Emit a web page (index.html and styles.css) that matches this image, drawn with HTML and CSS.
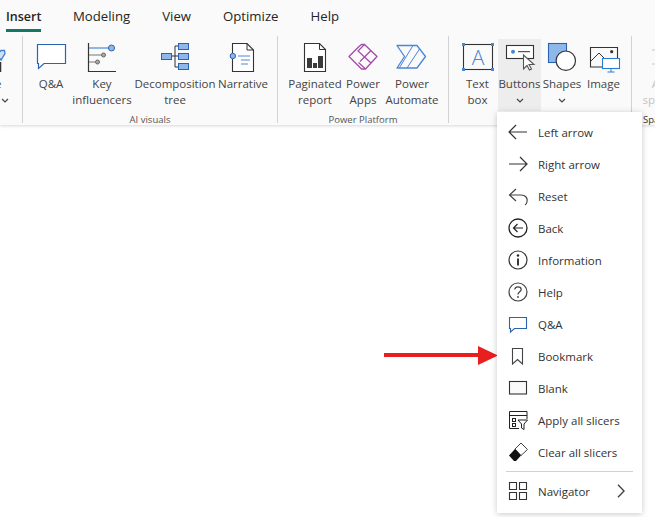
FILE: index.html
```
<!DOCTYPE html>
<html lang="en">
<head>
<meta charset="utf-8">
<title>Insert ribbon</title>
<link rel="stylesheet" href="styles.css">
</head>
<body>
<header class="ribbon">
  <nav class="tabs">
    <span class="tab tab-active">Insert</span>
    <span class="tab">Modeling</span>
    <span class="tab">View</span>
    <span class="tab">Optimize</span>
    <span class="tab">Help</span>
  </nav>
  <div class="groups">
    <section class="group group-lead">
      <div class="lead-item">
        <svg class="lead-icon" width="22" height="32" viewBox="0 0 22 32"><path d="M-3 14L1 9.5H4.5L5 12.5L1 19Z" fill="#cfe0f5" stroke="#3b7fd0" stroke-width="1.3"/><path d="M.5 21v10" stroke="#333" stroke-width="1.5"/></svg>
        <span class="lead-text">e</span>
        <svg class="chev" width="8" height="5" viewBox="0 0 8 5"><path d="M1 1l3 3 3-3" fill="none" stroke="#444" stroke-width="1.2"/></svg>
      </div>
    </section>

    <section class="group group-ai">
      <div class="items">
        <div class="item w-qa">
          <svg class="icon" width="34" height="32" viewBox="0 0 34 32"><path d="M3.5 3.5H31.5V22.5H10L4.5 27.5V22.5H3.5Z" fill="#fff" stroke="#2b63ae" stroke-width="1.2"/></svg>
          <span class="label">Q&amp;A</span>
        </div>
        <div class="item w-key">
          <svg class="icon" width="34" height="32" viewBox="0 0 34 32"><path d="M3.5 2V30.5H31" fill="none" stroke="#333" stroke-width="1.2"/><path d="M4 7H24" stroke="#4a86d8" stroke-width="1.2"/><path d="M4 14H16M4 21H10" stroke="#777" stroke-width="1.2"/><circle cx="26.5" cy="7" r="3" fill="#8fb8ea" stroke="#2b63ae"/><circle cx="18.5" cy="14" r="2" fill="#aaa" stroke="#666"/><circle cx="12.5" cy="21" r="2" fill="#aaa" stroke="#666"/></svg>
          <span class="label">Key<br>influencers</span>
        </div>
        <div class="item w-dec">
          <svg class="icon" width="34" height="32" viewBox="0 0 34 32"><path d="M14 15H20M17 5V26M17 5H20M17 26H20" fill="none" stroke="#333"/><rect x="3.5" y="12.5" width="10" height="6" fill="#8fb8ea" stroke="#2b63ae"/><rect x="20.5" y="2.5" width="10" height="6" fill="#8fb8ea" stroke="#2b63ae"/><rect x="20.5" y="12.5" width="10" height="6" fill="#8fb8ea" stroke="#2b63ae"/><rect x="20.5" y="22.5" width="10" height="6" fill="#8fb8ea" stroke="#2b63ae"/></svg>
          <span class="label">Decomposition<br>tree</span>
        </div>
        <div class="item w-nar">
          <svg class="icon" width="34" height="32" viewBox="0 0 34 32"><path d="M6.5 12V2.5H21L27.5 9V30.5H6.5V18" fill="#fff" stroke="#333" stroke-width="1.1"/><path d="M21 2.5V9H27.5" fill="none" stroke="#333"/><circle cx="6.8" cy="15" r="2.7" fill="#8fb8ea" stroke="#2b63ae"/><path d="M12 15H24M15 19H24M15 23H22" stroke="#4a86d8"/></svg>
          <span class="label">Narrative</span>
        </div>
      </div>
      <div class="group-name">AI visuals</div>
    </section>

    <section class="group group-pp">
      <div class="items">
        <div class="item w-pag">
          <svg class="icon" width="34" height="32" viewBox="0 0 34 32"><path d="M6.5 2.5H21.5L27.5 8.5V30.5H6.5Z" fill="#fff" stroke="#333" stroke-width="1.1"/><path d="M21.5 2.5V8.5H27.5" fill="none" stroke="#333"/><path d="M9 17h5v10H9zM15 22h4v5h-4zM20 15h5v12h-5z" fill="#3b3a39"/></svg>
          <span class="label">Paginated<br>report</span>
        </div>
        <div class="item w-app">
          <svg class="icon" width="34" height="32" viewBox="0 0 34 32"><path d="M3 15.5L13 5.5L15.5 3.5H18.5L31 15.5L19.5 28H15.5Z" fill="none" stroke="#a24aa8" stroke-width="1.3" stroke-linejoin="round"/><path d="M18.5 3.5L12 10L25 22M25 9.5L14 20.5M12.5 21.5L19.5 28" fill="none" stroke="#a24aa8" stroke-width="1.2"/></svg>
          <span class="label">Power<br>Apps</span>
        </div>
        <div class="item w-aut">
          <svg class="icon" width="34" height="32" viewBox="0 0 34 32"><path d="M2 4.5H22L30.5 15.5L22 27H2L9.5 15.5Z" fill="none" stroke="#4a86d8" stroke-width="1.3" stroke-linejoin="round"/><path d="M18 4.5L4.5 26.5M24.5 8L12 27" fill="none" stroke="#4a86d8"/></svg>
          <span class="label">Power<br>Automate</span>
        </div>
      </div>
      <div class="group-name">Power Platform</div>
    </section>

    <section class="group group-ins">
      <div class="items">
        <div class="item w-txt">
          <svg class="icon" width="34" height="32" viewBox="0 0 34 32"><rect x="2.5" y="3.5" width="29" height="25" fill="none" stroke="#333" stroke-width="1.1"/><g fill="#4a86d8"><rect x="1" y="2" width="3" height="3"/><rect x="30" y="2" width="3" height="3"/><rect x="1" y="27" width="3" height="3"/><rect x="30" y="27" width="3" height="3"/></g><text x="17" y="24" text-anchor="middle" class="svg-a">A</text></svg>
          <span class="label">Text<br>box</span>
        </div>
        <div class="item w-btn item-on">
          <svg class="icon" width="34" height="32" viewBox="0 0 34 32"><rect x="3.5" y="4.5" width="27" height="13" fill="#fff" stroke="#333" stroke-width="1.1"/><circle cx="10" cy="10.7" r="2" fill="#4a86d8"/><path d="M15 10.7H27" stroke="#333"/><path d="M20.5 14V28L24 24.5L26.5 29L28.5 28L26 23.5H31Z" fill="#fff" stroke="#555" stroke-width="1.1"/></svg>
          <span class="label">Buttons</span>
          <svg class="chev" width="8" height="5" viewBox="0 0 8 5"><path d="M1 1l3 3 3-3" fill="none" stroke="#444" stroke-width="1.2"/></svg>
        </div>
        <div class="item w-shp">
          <svg class="icon" width="34" height="32" viewBox="0 0 34 32"><rect x="3.5" y="2.5" width="18" height="19" fill="#8fb8ea" stroke="#2b63ae" stroke-width="1.1"/><circle cx="20.8" cy="19.7" r="9.7" fill="#fff" stroke="#333" stroke-width="1.2"/></svg>
          <span class="label">Shapes</span>
          <svg class="chev" width="8" height="5" viewBox="0 0 8 5"><path d="M1 1l3 3 3-3" fill="none" stroke="#444" stroke-width="1.2"/></svg>
        </div>
        <div class="item w-img">
          <svg class="icon" width="34" height="32" viewBox="0 0 34 32"><path d="M15 26H3.5V6.5H30.5V17" fill="none" stroke="#333" stroke-width="1.1"/><path d="M4 20L12 12L17 17" fill="none" stroke="#333"/><circle cx="24.7" cy="10.7" r="1.6" fill="#333"/><rect x="15.5" y="17.5" width="17" height="10" fill="#fff" stroke="#2b7cd3" stroke-width="1.1"/><path d="M24 28V31M20.5 31H27.5" stroke="#2b7cd3"/></svg>
          <span class="label">Image</span>
        </div>
      </div>
    </section>

    <section class="group group-spark">
      <div class="items">
        <div class="item w-spk">
          <svg class="icon" width="34" height="32" viewBox="0 0 34 32"><path d="M2 9H34M2 23H34" stroke="#c8c8c8"/></svg>
          <span class="label label-off">Add&nbsp;&nbsp;&nbsp;<br>sparkline</span>
        </div>
      </div>
      <div class="group-name">Sparklines</div>
    </section>
  </div>
</header>

<svg class="pointer" width="114" height="20" viewBox="0 0 114 20"><path d="M0 7H94V0L114 9.5L94 19V11H0Z" fill="#e81f1f"/></svg>

<ul class="menu">
  <li class="menu-item">
    <svg class="m-icon" width="24" height="24" viewBox="0 0 24 24"><path d="M21 12H3.5M10 5L3 12L10 19" fill="none" stroke="#333" stroke-width="1.2"/></svg>
    <span>Left arrow</span>
  </li>
  <li class="menu-item">
    <svg class="m-icon" width="24" height="24" viewBox="0 0 24 24"><path d="M3 12H20.5M14 5L21 12L14 19" fill="none" stroke="#333" stroke-width="1.2"/></svg>
    <span>Right arrow</span>
  </li>
  <li class="menu-item">
    <svg class="m-icon" width="24" height="24" viewBox="0 0 24 24"><path d="M10 5L3.5 11L10 17M4 11H15C19.5 11 22 14 21 18C20.7 19.5 20 20.5 19 21" fill="none" stroke="#444" stroke-width="1.2"/></svg>
    <span>Reset</span>
  </li>
  <li class="menu-item">
    <svg class="m-icon" width="24" height="24" viewBox="0 0 24 24"><circle cx="12" cy="12" r="9" fill="none" stroke="#222" stroke-width="1.3"/><path d="M17 12H7.5M11.5 8L7.5 12L11.5 16" fill="none" stroke="#222" stroke-width="1.2"/></svg>
    <span>Back</span>
  </li>
  <li class="menu-item">
    <svg class="m-icon" width="24" height="24" viewBox="0 0 24 24"><circle cx="12" cy="12" r="9" fill="none" stroke="#333" stroke-width="1.2"/><path d="M12 10.5V17.5" stroke="#222" stroke-width="1.8"/><circle cx="12" cy="7.5" r="1.2" fill="#222"/></svg>
    <span>Information</span>
  </li>
  <li class="menu-item">
    <svg class="m-icon" width="24" height="24" viewBox="0 0 24 24"><circle cx="12" cy="12" r="9" fill="none" stroke="#444" stroke-width="1.2"/><path d="M8.8 9.5C9 7.5 10.5 6.8 12 6.8C13.8 6.8 15.2 8 15.2 9.5C15.2 11.8 12 11.8 12 14.5" fill="none" stroke="#444" stroke-width="1.2"/><circle cx="12" cy="17" r="0.9" fill="#444"/></svg>
    <span>Help</span>
  </li>
  <li class="menu-item">
    <svg class="m-icon" width="24" height="24" viewBox="0 0 24 24"><path d="M3.5 5.5H20.5V16.5H8.5L4.5 20V16.5H3.5Z" fill="#fff" stroke="#2b63ae" stroke-width="1.1"/></svg>
    <span>Q&amp;A</span>
  </li>
  <li class="menu-item">
    <svg class="m-icon" width="24" height="24" viewBox="0 0 24 24"><path d="M6.5 4.5H16.5V20L11.5 15.5L6.5 20Z" fill="#fff" stroke="#444" stroke-width="1.1"/></svg>
    <span>Bookmark</span>
  </li>
  <li class="menu-item">
    <svg class="m-icon" width="24" height="24" viewBox="0 0 24 24"><rect x="3.5" y="5.5" width="17" height="12.5" fill="#fafafa" stroke="#333" stroke-width="1.1"/></svg>
    <span>Blank</span>
  </li>
  <li class="menu-item">
    <svg class="m-icon" width="24" height="24" viewBox="0 0 24 24"><path d="M13 20.5H3.5V3.5H21V11" fill="none" stroke="#222"/><path d="M3.5 7.5H21" stroke="#222"/><rect x="6.5" y="10.5" width="3" height="3" fill="none" stroke="#222"/><rect x="6.5" y="15.5" width="3" height="3" fill="none" stroke="#222"/><path d="M12 12H21.5L18 16V21.5L15.5 20V16Z" fill="#fff" stroke="#222"/></svg>
    <span>Apply all slicers</span>
  </li>
  <li class="menu-item">
    <svg class="m-icon" width="24" height="24" viewBox="0 0 24 24"><path d="M15 3L21.5 9.5L15 15.5L9 9Z" fill="#fff" stroke="#444"/><path d="M9 9L15 15.5L10 21H8L3 15.5Z" fill="#111"/></svg>
    <span>Clear all slicers</span>
  </li>
  <li class="menu-divider"></li>
  <li class="menu-item">
    <svg class="m-icon" width="24" height="24" viewBox="0 0 24 24"><path d="M3.5 3.5h7v7h-7zM13.5 3.5h7v7h-7zM3.5 13.5h7v7h-7zM13.5 13.5h7v7h-7z" fill="none" stroke="#333" stroke-width="1.1"/></svg>
    <span class="menu-grow">Navigator</span>
    <svg class="m-chev" width="8" height="14" viewBox="0 0 8 14"><path d="M1 .8L7 7L1 13.2" fill="none" stroke="#444" stroke-width="1.4"/></svg>
  </li>
</ul>
</body>
</html>
```
FILE: styles.css
```
* { box-sizing: border-box; }
html, body { margin: 0; height: 100%; }
body {
  background: #fff;
  overflow: hidden;
  position: relative;
  font-family: "Open Sans", "Noto Sans", sans-serif;
  color: #333;
}
.ribbon {
  height: 125px;
  background: #fafafa;
  box-shadow: 0 1px 3px rgba(0,0,0,.16);
  overflow: hidden;
}
.tabs {
  display: flex;
  height: 36px;
  padding-left: 6px;
  gap: 32px;
  font-size: 13.2px;
  color: #252423;
}
.tab { height: 32px; padding-top: 7px; line-height: 19px; }
.tab-active { width: 35px; font-size: 12.5px; font-weight: 600; border-bottom: 3px solid #117865; white-space: nowrap; }
.groups { display: flex; height: 89px; }
.group {
  position: relative;
  flex: none;
  border-right: 1px solid #d2d2d2;
  height: 87px;
}
.group-lead { width: 23px; overflow: hidden; }
.group-ai { width: 255px; padding-left: 7px; }
.group-pp { width: 171px; padding-left: 8px; }
.group-ins { width: 183px; padding-left: 8px; }
.group-spark { width: 60px; border-right: 0; padding-left: 0; }
.items { display: flex; }
.item {
  flex: none;
  height: 72px;
  padding-top: 5px;
  display: flex;
  flex-direction: column;
  align-items: center;
  text-align: center;
  font-size: 11.5px;
  line-height: 16px;
  color: #444;
}
.item-on { background: #ededed; height: 72px; margin-top: 3px; padding-top: 2px; }
.w-qa { width: 42px; }
.w-key { width: 60px; }
.w-dec { width: 86px; }
.w-nar { width: 50px; }
.w-pag { width: 58px; }
.w-app { width: 38px; }
.w-aut { width: 60px; }
.w-txt { width: 41px; }
.w-btn { width: 43px; }
.w-shp { width: 42px; }
.w-img { width: 41px; }
.w-spk { width: 70px; }
.icon { display: block; flex: none; margin-bottom: 3px; }
.label { white-space: nowrap; }
.label-off { color: #c4c4c4; }
.chev { display: block; margin-top: 6px; }
.group-name {
  position: absolute;
  left: 0;
  right: 0;
  top: 77px;
  text-align: center;
  font-size: 9.5px;
  line-height: 14px;
  color: #555;
  white-space: nowrap;
}
.group-spark .group-name { text-align: left; padding-left: 11px; color: #333; }
.lead-item { position: relative; height: 72px; padding-top: 5px; font-size: 11.5px; line-height: 16px; color: #444; }
.lead-icon { display: block; margin-bottom: 3px; }
.lead-text { display: block; margin-left: -5px; }
.lead-item .chev { margin: 6px 0 0 1px; }
.svg-a { font-size: 21px; font-weight: 300; fill: #4a86d8; font-family: "Open Sans", sans-serif; }
.pointer { position: absolute; left: 384px; top: 346px; }
.menu {
  position: absolute;
  left: 497px;
  top: 112px;
  width: 145px;
  height: 401px;
  margin: 0;
  padding: 4px 0 0;
  list-style: none;
  background: #fff;
  box-shadow: 0 1px 6px rgba(0,0,0,.22);
}
.menu-item {
  display: flex;
  align-items: center;
  gap: 8px;
  height: 32px;
  padding: 0 17px 0 9px;
  font-size: 11.5px;
  color: #333;
  white-space: nowrap;
}
.m-icon { display: block; flex: none; }
.menu-grow { flex: 1; }
.menu-divider { height: 1px; margin: 3px 9px 3px 9px; background: #d2d2d2; }
```
